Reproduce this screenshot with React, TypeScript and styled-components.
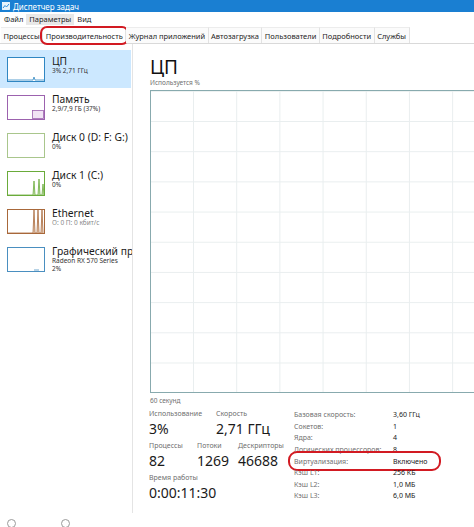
import React from 'react';
import styled, { createGlobalStyle } from 'styled-components';

const GlobalStyle = createGlobalStyle`
  html, body {
    margin: 0;
    padding: 0;
    background: #ffffff;
    overflow: hidden;
  }
  body {
    font-family: "Noto Sans", "Open Sans", sans-serif;
    color: #1e1e1e;
  }
`;

const Window = styled.div`
  width: 474px;
  height: 527px;
  display: flex;
  flex-direction: column;
  overflow: hidden;
`;

const TitleBar = styled.div`
  height: 12px;
  flex-shrink: 0;
  background: #1a7fd2;
  color: #ffffff;
  font-size: 8px;
  display: flex;
  align-items: center;
  gap: 3px;
  padding-left: 2px;
`;

const MenuBar = styled.div`
  height: 15px;
  flex-shrink: 0;
  display: flex;
  align-items: center;
  padding-left: 1px;
  font-size: 7.5px;
`;

const MenuItem = styled.div<{ $active?: boolean }>`
  height: 11px;
  line-height: 11px;
  padding: 0 3px;
  background: ${(p) => (p.$active ? '#e8e8e8' : 'transparent')};
`;

const TabBar = styled.div`
  height: 16px;
  flex-shrink: 0;
  display: flex;
  align-items: stretch;
  padding-left: 1px;
  border-bottom: 1px solid #d9d9d9;
  font-size: 7.5px;
`;

const Tab = styled.div<{ $circled?: boolean }>`
  position: relative;
  display: flex;
  align-items: center;
  padding: 0 2.5px;
  border-right: 1px solid #e2e2e2;
  border-top: 1px solid #ececec;
  background: ${(p) => (p.$circled ? '#ffffff' : '#fbfbfb')};

  &::after {
    content: '';
    display: ${(p) => (p.$circled ? 'block' : 'none')};
    position: absolute;
    left: -3px;
    right: -4px;
    top: -2px;
    bottom: -2px;
    border: 2.5px solid #d21a22;
    border-radius: 7px;
  }
`;

const Body = styled.div`
  flex: 1;
  display: flex;
  min-height: 0;
`;

const Sidebar = styled.div`
  width: 133px;
  flex-shrink: 0;
  border-right: 1px solid #e4e4e4;
  padding-top: 6px;
  box-sizing: border-box;
  overflow: hidden;
`;

const SideItem = styled.div<{ $selected?: boolean }>`
  height: 38px;
  width: 131px;
  display: flex;
  gap: 7px;
  padding: 7px 0 0 7px;
  box-sizing: border-box;
  background: ${(p) => (p.$selected ? '#cce8ff' : 'transparent')};
`;

const Thumb = styled.div<{ $color: string }>`
  width: 38px;
  height: 25px;
  flex-shrink: 0;
  box-sizing: border-box;
  border: 1px solid ${(p) => p.$color};
  background: #ffffff;

  svg {
    display: block;
  }
`;

const SideText = styled.div`
  display: flex;
  flex-direction: column;
  white-space: nowrap;
  margin-top: -2px;
`;

const SideName = styled.div`
  font-size: 10.3px;
  line-height: 12px;
  color: #1a1a1a;
`;

const SideSub = styled.div<{ $muted?: boolean }>`
  font-size: 6.5px;
  line-height: 8px;
  color: ${(p) => (p.$muted ? '#8a8a8a' : '#333333')};
`;

const Main = styled.div`
  flex: 1;
  padding: 12px 0 0 17px;
  min-width: 0;
`;

const Heading = styled.div`
  font-size: 19px;
  line-height: 23px;
  color: #111111;
`;

const SmallCaption = styled.div`
  font-size: 6.5px;
  line-height: 8px;
  color: #707070;
`;

const Chart = styled.div`
  margin-top: 3px;
  width: 432px;
  height: 303px;
  box-sizing: border-box;
  border: 1px solid #88aaae;
  background-color: #ffffff;
  background-image:
    linear-gradient(to right, #e9eeef 1px, transparent 1px),
    linear-gradient(to bottom, #e9eeef 1px, transparent 1px);
  background-size: 43.2px 100%, 100% 30.2px;
  background-position: 42px 0, 0 30px;
`;

const Footnote = styled(SmallCaption)`
  margin-top: 4px;
`;

const Stats = styled.div`
  display: flex;
  margin-top: 4px;
  margin-left: -1px;
`;

const LeftStats = styled.div`
  width: 144px;
  flex-shrink: 0;
  display: flex;
  flex-direction: column;
  gap: 3px;
`;

const StatRow = styled.div`
  display: flex;
`;

const Stat = styled.div<{ $w?: number }>`
  width: ${(p) => (p.$w ? `${p.$w}px` : 'auto')};
  flex-shrink: 0;
  white-space: nowrap;
`;

const StatLabel = styled.div`
  font-size: 7px;
  line-height: 10px;
  color: #707070;
`;

const StatValue = styled.div`
  font-size: 14px;
  line-height: 19px;
  color: #1a1a1a;
`;

const RightStats = styled.div`
  display: flex;
  flex-direction: column;
  padding: 0 0 0 1px;
`;

const InfoRow = styled.div<{ $circled?: boolean }>`
  position: relative;
  display: flex;
  height: 11.6px;
  align-items: center;
  font-size: 7px;
  white-space: nowrap;

  &::after {
    content: '';
    display: ${(p) => (p.$circled ? 'block' : 'none')};
    position: absolute;
    left: -6px;
    right: -4px;
    top: -4px;
    bottom: -4px;
    border: 2.5px solid #d21a22;
    border-radius: 9px;
  }
`;

const InfoLabel = styled.div`
  width: 99px;
  color: #707070;
`;

const InfoValue = styled.div`
  width: 44px;
  color: #1a1a1a;
`;

const Footer = styled.div`
  height: 14px;
  flex-shrink: 0;
  display: flex;
  gap: 45px;
  padding: 6px 0 0 7px;
  box-sizing: border-box;
`;

const FooterIcon = styled.div`
  width: 9px;
  height: 9px;
  border-radius: 50%;
  border: 1.5px solid #9a9a9a;
  box-sizing: border-box;
`;

type ThumbKind = 'cpu' | 'mem' | 'disk0' | 'disk1' | 'eth' | 'gpu';

const ThumbArt = ({ kind, color }: { kind: ThumbKind; color: string }) => (
  <svg width="36" height="23" viewBox="0 0 36 23">
    {kind === 'cpu' && (
      <polyline points="0,22 25,22 26,19 27,22 36,22" fill="none" stroke={color} strokeWidth="0.8" />
    )}
    {kind === 'mem' && (
      <rect x="24.5" y="14.5" width="11" height="8" fill="#f1e4f4" stroke={color} strokeWidth="0.8" />
    )}
    {kind === 'disk1' && (
      <polyline
        points="0,23 25,23 26,9 27,23 30,23 31,7 32,23 34,23 35,12 36,23"
        fill="#cfe6bd"
        stroke={color}
        strokeWidth="0.8"
      />
    )}
    {kind === 'eth' && (
      <polyline
        points="0,23 25,23 26,0 27,23 29,23 30,0 31,23 33,23 34,0 35,23"
        fill="#ecd3bf"
        stroke={color}
        strokeWidth="0.8"
      />
    )}
    {kind === 'gpu' && (
      <polyline points="26,22 31,22" fill="none" stroke={color} strokeWidth="0.8" />
    )}
  </svg>
);

const items: {
  kind: ThumbKind;
  color: string;
  name: string;
  sub: string[];
  muted?: boolean;
  selected?: boolean;
}[] = [
  { kind: 'cpu', color: '#2f86c2', name: 'ЦП', sub: ['3% 2,71 ГГц'], selected: true },
  { kind: 'mem', color: '#9c62ae', name: 'Память', sub: ['2,9/7,9 ГБ (37%)'] },
  { kind: 'disk0', color: '#a9c68c', name: 'Диск 0 (D: F: G:)', sub: ['0%'] },
  { kind: 'disk1', color: '#6aab3a', name: 'Диск 1 (C:)', sub: ['0%'] },
  { kind: 'eth', color: '#a8683a', name: 'Ethernet', sub: ['О: 0 П: 0 кбит/с'], muted: true },
  { kind: 'gpu', color: '#4a8fc0', name: 'Графический процессор 0', sub: ['Radeon RX 570 Series', '2%'] },
];

const info: [string, string, boolean?][] = [
  ['Базовая скорость:', '3,60 ГГц'],
  ['Сокетов:', '1'],
  ['Ядра:', '4'],
  ['Логических процессоров:', '8'],
  ['Виртуализация:', 'Включено', true],
  ['Кэш L1:', '256 КБ'],
  ['Кэш L2:', '1,0 МБ'],
  ['Кэш L3:', '6,0 МБ'],
];

const AppIcon = () => (
  <svg width="8" height="8" viewBox="0 0 8 8">
    <rect x="0.5" y="0.5" width="7" height="7" fill="#e8f3fc" stroke="#ffffff" strokeWidth="0.8" />
    <polyline points="1,6 3,3.5 4.5,5 7,2" fill="none" stroke="#1a7fd2" strokeWidth="0.9" />
  </svg>
);

export default function App() {
  return (
    <Window>
      <GlobalStyle />
      <TitleBar>
        <AppIcon />
        <span>Диспетчер задач</span>
      </TitleBar>
      <MenuBar>
        <MenuItem>Файл</MenuItem>
        <MenuItem $active>Параметры</MenuItem>
        <MenuItem>Вид</MenuItem>
      </MenuBar>
      <TabBar>
        <Tab>Процессы</Tab>
        <Tab $circled>Производительность</Tab>
        <Tab>Журнал приложений</Tab>
        <Tab>Автозагрузка</Tab>
        <Tab>Пользователи</Tab>
        <Tab>Подробности</Tab>
        <Tab>Службы</Tab>
      </TabBar>
      <Body>
        <Sidebar>
          {items.map((it) => (
            <SideItem key={it.name} $selected={it.selected}>
              <Thumb $color={it.color}>
                <ThumbArt kind={it.kind} color={it.color} />
              </Thumb>
              <SideText>
                <SideName>{it.name}</SideName>
                {it.sub.map((s) => (
                  <SideSub key={s} $muted={it.muted}>
                    {s}
                  </SideSub>
                ))}
              </SideText>
            </SideItem>
          ))}
        </Sidebar>
        <Main>
          <Heading>ЦП</Heading>
          <SmallCaption>Используется %</SmallCaption>
          <Chart />
          <Footnote>60 секунд</Footnote>
          <Stats>
            <LeftStats>
              <StatRow>
                <Stat $w={67}>
                  <StatLabel>Использование</StatLabel>
                  <StatValue>3%</StatValue>
                </Stat>
                <Stat>
                  <StatLabel>Скорость</StatLabel>
                  <StatValue>2,71 ГГц</StatValue>
                </Stat>
              </StatRow>
              <StatRow>
                <Stat $w={48}>
                  <StatLabel>Процессы</StatLabel>
                  <StatValue>82</StatValue>
                </Stat>
                <Stat $w={41}>
                  <StatLabel>Потоки</StatLabel>
                  <StatValue>1269</StatValue>
                </Stat>
                <Stat>
                  <StatLabel>Дескрипторы</StatLabel>
                  <StatValue>46688</StatValue>
                </Stat>
              </StatRow>
              <StatRow>
                <Stat>
                  <StatLabel>Время работы</StatLabel>
                  <StatValue>0:00:11:30</StatValue>
                </Stat>
              </StatRow>
            </LeftStats>
            <RightStats>
              {info.map(([label, value, circled]) => (
                <InfoRow key={label} $circled={circled}>
                  <InfoLabel>{label}</InfoLabel>
                  <InfoValue>{value}</InfoValue>
                </InfoRow>
              ))}
            </RightStats>
          </Stats>
        </Main>
      </Body>
      <Footer>
        <FooterIcon />
        <FooterIcon />
      </Footer>
    </Window>
  );
}
